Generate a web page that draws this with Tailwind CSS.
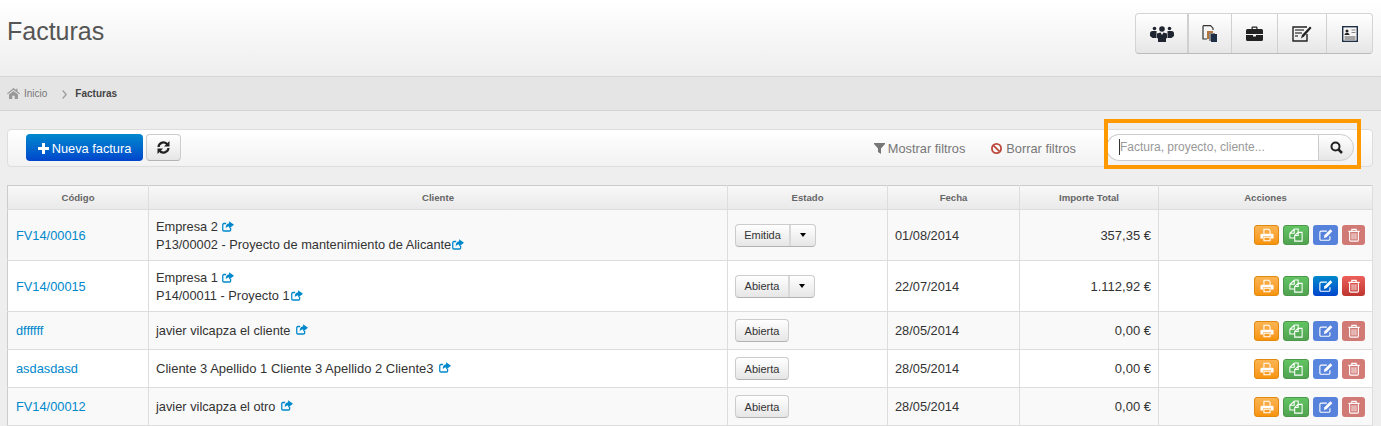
<!DOCTYPE html>
<html lang="es">
<head>
    <meta charset="UTF-8">
    <title>Facturas</title>
    <script src="https://cdn.jsdelivr.net/npm/@tailwindcss/browser@4"></script>
</head>
<body class="bg-[#eeeeee] font-['Liberation_Sans',Arial,sans-serif] text-[12.8px] text-[#333333] h-[426px] overflow-hidden">
    <!-- iconos -->
    <svg class="hidden">
        <symbol id="i-share" viewBox="0 0 16 14">
            <path d="M11.500 8.500V11.500a1.500 1.500 0 0 1-1.500 1.500H2.500A1.500 1.500 0 0 1 1 11.500V4.500A1.500 1.500 0 0 1 2.500 3h3" fill="none" stroke="currentColor" stroke-width="1.700"/>
            <path d="M9.500 0L16 4.800 9.500 9.500V7C7.500 7 6 7.500 5 9.500 4.800 5.500 6.500 3 9.500 2.700z" fill="currentColor"/>
        </symbol>
        <symbol id="i-print" viewBox="0 0 16 16">
            <path d="M4.500 6.500V1.500H10L11.500 3V6.500M4.500 10.500h7v4h-7z" fill="none" stroke="currentColor" stroke-width="1.200"/>
            <path d="M2 6.500h12a1.500 1.500 0 0 1 1.500 1.500V12H12.500V9.500h-9V12H.5V8A1.500 1.500 0 0 1 2 6.500z" fill="currentColor"/>
        </symbol>
        <symbol id="i-copy" viewBox="0 0 16 16">
            <path d="M6 1.200h4.500V5M6 1.200L1 6v5.500h5.500M6 1.200V6H1" fill="none" stroke="currentColor" stroke-width="1.200"/>
            <path d="M10.500 5H15v10H6.500V8.500zM10.500 5v3.500h-4" fill="none" stroke="currentColor" stroke-width="1.200"/>
        </symbol>
        <symbol id="i-edit" viewBox="0 0 16 16">
            <path d="M12.500 9.500V12.500a1.500 1.500 0 0 1-1.500 1.500H2.500A1.500 1.500 0 0 1 1 12.500V5A1.500 1.500 0 0 1 2.500 3.500H9" fill="none" stroke="currentColor" stroke-width="1.300"/>
            <path d="M13 1.500l2.300 2.300L8.500 10.700l-3 .7.700-3z" fill="currentColor"/>
        </symbol>
        <symbol id="i-trash" viewBox="0 0 16 16">
            <path d="M1.500 3.800h13M5.500 3.500V1.500h5v2M3 4v10a1 1 0 0 0 1 1h8a1 1 0 0 0 1-1V4" fill="none" stroke="currentColor" stroke-width="1.300"/>
            <path d="M5.800 6v7M8 6v7M10.200 6v7" stroke="currentColor" stroke-width="1"/>
        </symbol>
    </svg>

    <!-- Cabecera -->
    <header class="h-[77px] border-b border-[#d5d5d5] bg-gradient-to-b from-white to-[#eeeeee] flex justify-between pl-[7px] pr-[8px]">
        <h1 class="text-[25px] leading-[29px] pt-[17px] text-[#555555]">Facturas</h1>
        <div class="mt-[13px] h-[41px] w-[238px] flex border border-[#d4d4d4] border-b-[#bbbbbb] rounded-[4px] bg-gradient-to-b from-white to-[#e6e6e6] text-[#222222]">
            <a class="w-[53px] flex items-center justify-center border-r-2 border-[#d0d0d0]">
                <svg width="24" height="16" viewBox="0 0 24 16" fill="#1f2530"><circle cx="12" cy="3" r="2.800"/><circle cx="4.500" cy="2.500" r="1.800"/><circle cx="19.500" cy="2.500" r="1.800"/><path d="M0 7.500Q0 5 2.500 5H6.500V12H2.500L0 10zM24 7.500Q24 5 21.500 5H17.500V12H21.500L24 10z"/><path d="M7 7.500L10.500 6.500 12 9 13.500 6.500 17 7.500V12L16 12.500V16H8V12.500L7 12z"/></svg>
            </a>
            <a class="w-[43px] flex items-center justify-center border-r border-[#d0d0d0]">
                <svg width="16" height="17" viewBox="0 0 16 17"><path d="M1 .7h7.500l2.500 2.500V5M1 .7V14h4" fill="none" stroke="#333" stroke-width="1.200"/><rect x="5" y="6" width="6" height="8" fill="#b5763e"/><rect x="7" y="8" width="6" height="8" fill="#888"/><rect x="9" y="9" width="6" height="8" fill="#1f2f45"/></svg>
            </a>
            <a class="w-[46px] flex items-center justify-center border-r border-[#d0d0d0]">
                <svg width="17" height="15" viewBox="0 0 17 15" fill="#222"><path d="M5.500 3V1.500A1 1 0 0 1 6.500.5h4a1 1 0 0 1 1 1V3H10.300V1.800H6.700V3z"/><path d="M1.500 3h14A1.500 1.500 0 0 1 17 4.500V8H0V4.500A1.500 1.500 0 0 1 1.500 3zM0 9h7v1.500h3V9h7v4.500a1.500 1.500 0 0 1-1.500 1.500h-14A1.500 1.500 0 0 1 0 13.500z"/></svg>
            </a>
            <a class="w-[49px] flex items-center justify-center border-r border-[#d0d0d0]">
                <svg width="20" height="16" viewBox="0 0 20 16"><path d="M15 8v7H1V1h14" fill="none" stroke="#222" stroke-width="1.400"/><path d="M3 4h9M3 7h7M3 10h3" stroke="#555" stroke-width="1.300"/><path d="M18 .5l1.500 1.500-7.500 8.500-3 2 1-3.500z" fill="#222"/></svg>
            </a>
            <a class="flex-1 flex items-center justify-center">
                <svg width="16" height="16" viewBox="0 0 16 16"><rect x=".7" y=".7" width="14.600" height="14.600" fill="#f5f5f5" stroke="#1f2f45" stroke-width="1.400"/><circle cx="5" cy="5" r="1.500" fill="#222"/><path d="M2.500 9c0-1.500 1-2 2.500-2s2.500 .5 2.500 2z" fill="#222"/><path d="M9.500 4h4M9.500 6.500h4" stroke="#888" stroke-width="1.200"/><path d="M2.500 11h11M2.500 13h11" stroke="#555" stroke-width="1.200"/></svg>
            </a>
        </div>
    </header>

    <!-- Migas -->
    <nav class="h-[34px] bg-[#e5e5e5] border-b border-[#d5d5d5] flex items-center pl-[7px] text-[10px] text-[#777777]">
        <svg width="13" height="11" viewBox="0 0 13 11" fill="#999999"><path d="M6.500 0L0 5.500l.8.800L6.500 1.800l5.700 4.500.8-.800-2.500-2.100V.8H9.200v1.200z"/><path d="M6.500 3L2 6.500V11h3.300V7.800h2.400V11H11V6.500z"/></svg>
        <span class="ml-[4px]">Inicio</span>
        <svg class="ml-[15px] mt-[1px]" width="5" height="9" viewBox="0 0 5 9" fill="none" stroke="#999999" stroke-width="1.200"><path d="M.7 .5l3.500 4-3.500 4"/></svg>
        <strong class="ml-[8px] text-[#444444] font-bold">Facturas</strong>
    </nav>

    <!-- Barra de herramientas -->
    <div class="relative mt-[18px] ml-[7px] mr-[8px] h-[38px] pb-[1px] border border-[#dddddd] rounded-[4px] bg-gradient-to-b from-white to-[#f2f2f2] flex items-center pl-[18px]">
        <button class="h-[27px] w-[117px] pt-[2px] rounded-[4px] bg-gradient-to-b from-[#0088cc] to-[#0044cc] text-white flex items-center justify-center text-[12.8px]">
            <svg class="mr-[3px]" width="11" height="11" viewBox="0 0 11 11" fill="white"><path d="M4 0h3v4h4v3H7v4H4V7H0V4h4z"/></svg>Nueva factura
        </button>
        <button class="ml-[3px] h-[27px] w-[35px] rounded-[4px] border border-[#cccccc] border-b-[#b3b3b3] bg-gradient-to-b from-white to-[#e6e6e6] flex items-center justify-center">
            <svg width="13" height="13" viewBox="0 0 13 13" fill="none" stroke="#222222" stroke-width="2.200"><path d="M1.500 6A5 5 0 0 1 10.500 3.500M11.500 7A5 5 0 0 1 2.500 9.500"/><path d="M12.500 0v5.500H7z M.5 13V7.500H6z" fill="#222222" stroke="none"/></svg>
        </button>
        <a class="ml-auto pt-[2px] flex items-center text-[#777777]">
            <svg class="mr-[3px]" width="11" height="11" viewBox="0 0 11 11" fill="#777777"><path d="M0 0h11v1L7 5.500V11L4 9V5.500L0 1z"/></svg>Mostrar filtros
        </a>
        <a class="ml-[26px] pt-[2px] flex items-center text-[#777777]">
            <svg class="mr-[4px]" width="11" height="11" viewBox="0 0 12 12" fill="none" stroke="#bd4a3e" stroke-width="2"><circle cx="6" cy="6" r="5"/><path d="M2.500 2.500l7 7"/></svg>Borrar filtros
        </a>
        <div class="ml-[30px] mr-[18px] h-[27px] w-[248px] flex">
            <div class="flex-1 bg-white border border-[#cccccc] border-r-0 rounded-l-full flex items-center pl-[12px] pb-[2px] text-[#999999] text-[12px]">
                <span class="border-l border-[#333333] leading-[16px]">Factura, proyecto, cliente...</span>
            </div>
            <button class="w-[36px] border border-[#cccccc] rounded-r-full bg-gradient-to-b from-white to-[#e6e6e6] flex items-center justify-center">
                <svg width="13" height="13" viewBox="0 0 13 13" fill="none" stroke="#222222" stroke-width="2"><circle cx="5.500" cy="5.500" r="4"/><path d="M8.500 8.500l3.500 3.500" stroke-width="2.500"/></svg>
            </button>
        </div>
        <!-- resaltado -->
        <div class="absolute left-[1096px] top-[-11px] w-[257px] h-[50px] border-[4px] border-[#ff9900]"></div>
    </div>

    <!-- Tabla -->
    <table class="mt-[18px] ml-[7px] w-[1366px] table-fixed border-collapse bg-white">
        <colgroup>
            <col class="w-[141px]"><col class="w-[579px]"><col class="w-[160px]"><col class="w-[132px]"><col class="w-[139px]"><col>
        </colgroup>
        <thead>
            <tr class="h-[24px] bg-gradient-to-b from-[#f8f8f8] to-[#e9e9e9] text-[9.6px] font-bold text-[#666666]">
                <th class="border border-[#dddddd] border-t-[#cccccc] border-l-[#cccccc] pt-[2px]">Código</th>
                <th class="border border-[#dddddd] border-t-[#cccccc] pt-[2px]">Cliente</th>
                <th class="border border-[#dddddd] border-t-[#cccccc] pt-[2px]">Estado</th>
                <th class="border border-[#dddddd] border-t-[#cccccc] pt-[2px]">Fecha</th>
                <th class="border border-[#dddddd] border-t-[#cccccc] pt-[2px]">Importe Total</th>
                <th class="border border-[#dddddd] border-t-[#cccccc] pt-[2px]">Acciones</th>
            </tr>
        </thead>
        <tbody>
            <tr class="h-[51px] bg-[#f9f9f9]">
                <td class="border border-[#dddddd] border-l-[#cccccc] pl-[8px] pt-[2px] text-[#0088cc]">FV14/00016</td>
                <td class="border border-[#dddddd] px-[7px] pt-[2px] leading-[18px]">
                    <div class="flex items-center">Empresa 2<svg class="ml-[4px] mb-[2px] text-[#0088cc]" width="12" height="11"><use href="#i-share"/></svg></div>
                    <div class="flex items-center">P13/00002 - Proyecto de mantenimiento de Alicante<svg class="ml-[1px] mb-[2px] text-[#0088cc]" width="12" height="11"><use href="#i-share"/></svg></div>
                </td>
                <td class="border border-[#dddddd] px-[7px]">
                    <div class="flex w-[81px] h-[23px] text-[11px] rounded-[4px] border border-[#cccccc] border-b-[#b3b3b3] bg-gradient-to-b from-white to-[#e6e6e6]">
                        <span class="flex-1 flex items-center justify-center border-r-2 border-[#d8d8d8]">Emitida</span>
                        <span class="w-[24px] flex items-center justify-center"><span class="border-x-[3.5px] border-x-transparent border-t-[4px] border-t-black"></span></span>
                    </div>
                </td>
                <td class="border border-[#dddddd] px-[7px] pt-[2px]">01/08/2014</td>
                <td class="border border-[#dddddd] px-[7px] pt-[2px] text-right text-[13px]">357,35 €</td>
                <td class="border border-[#dddddd] pr-[7px]">
                    <div class="flex justify-end gap-[4px]">
                        <span class="w-[25px] h-[20px] rounded-[3px] bg-gradient-to-b from-[#fbb450] to-[#f89406] border border-[#e08a10] text-white flex items-center justify-center"><svg width="14" height="14"><use href="#i-print"/></svg></span>
                        <span class="w-[26px] h-[20px] rounded-[3px] bg-gradient-to-b from-[#62c462] to-[#51a351] border border-[#4b984b] text-white flex items-center justify-center"><svg width="14" height="14"><use href="#i-copy"/></svg></span>
                        <span class="w-[25px] h-[20px] rounded-[3px] bg-[#0044cc] text-white flex items-center justify-center opacity-65"><svg width="14" height="14"><use href="#i-edit"/></svg></span>
                        <span class="w-[23px] h-[20px] rounded-[3px] bg-[#bd362f] text-white flex items-center justify-center opacity-65"><svg width="14" height="14"><use href="#i-trash"/></svg></span>
                    </div>
                </td>
            </tr>
            <tr class="h-[51px]">
                <td class="border border-[#dddddd] border-l-[#cccccc] pl-[8px] pt-[2px] text-[#0088cc]">FV14/00015</td>
                <td class="border border-[#dddddd] px-[7px] pt-[2px] leading-[18px]">
                    <div class="flex items-center">Empresa 1<svg class="ml-[4px] mb-[2px] text-[#0088cc]" width="12" height="11"><use href="#i-share"/></svg></div>
                    <div class="flex items-center">P14/00011 - Proyecto 1<svg class="ml-[1px] mb-[2px] text-[#0088cc]" width="12" height="11"><use href="#i-share"/></svg></div>
                </td>
                <td class="border border-[#dddddd] px-[7px]">
                    <div class="flex w-[80px] h-[23px] text-[11px] rounded-[4px] border border-[#cccccc] border-b-[#b3b3b3] bg-gradient-to-b from-white to-[#e6e6e6]">
                        <span class="flex-1 flex items-center justify-center border-r-2 border-[#d8d8d8]">Abierta</span>
                        <span class="w-[24px] flex items-center justify-center"><span class="border-x-[3.5px] border-x-transparent border-t-[4px] border-t-black"></span></span>
                    </div>
                </td>
                <td class="border border-[#dddddd] px-[7px] pt-[2px]">22/07/2014</td>
                <td class="border border-[#dddddd] px-[7px] pt-[2px] text-right text-[13px]">1.112,92 €</td>
                <td class="border border-[#dddddd] pr-[7px]">
                    <div class="flex justify-end gap-[4px]">
                        <span class="w-[25px] h-[20px] rounded-[3px] bg-gradient-to-b from-[#fbb450] to-[#f89406] border border-[#e08a10] text-white flex items-center justify-center"><svg width="14" height="14"><use href="#i-print"/></svg></span>
                        <span class="w-[26px] h-[20px] rounded-[3px] bg-gradient-to-b from-[#62c462] to-[#51a351] border border-[#4b984b] text-white flex items-center justify-center"><svg width="14" height="14"><use href="#i-copy"/></svg></span>
                        <span class="w-[25px] h-[20px] rounded-[3px] bg-gradient-to-b from-[#0088cc] to-[#0044cc] text-white flex items-center justify-center"><svg width="14" height="14"><use href="#i-edit"/></svg></span>
                        <span class="w-[23px] h-[20px] rounded-[3px] bg-gradient-to-b from-[#ee5f5b] to-[#bd362f] text-white flex items-center justify-center"><svg width="14" height="14"><use href="#i-trash"/></svg></span>
                    </div>
                </td>
            </tr>
            <tr class="h-[38px] bg-[#f9f9f9]">
                <td class="border border-[#dddddd] border-l-[#cccccc] pl-[8px] text-[#0088cc]">dffffff</td>
                <td class="border border-[#dddddd] px-[7px]">
                    <div class="flex items-center">javier vilcapza el cliente<svg class="ml-[6px] mb-[2px] text-[#0088cc]" width="12" height="11"><use href="#i-share"/></svg></div>
                </td>
                <td class="border border-[#dddddd] px-[7px]">
                    <div class="flex w-[54px] h-[23px] pt-[1px] text-[11px] rounded-[4px] border border-[#cccccc] border-b-[#b3b3b3] bg-gradient-to-b from-white to-[#e6e6e6] items-center justify-center">Abierta</div>
                </td>
                <td class="border border-[#dddddd] px-[7px]">28/05/2014</td>
                <td class="border border-[#dddddd] px-[7px] text-right text-[13px]">0,00 €</td>
                <td class="border border-[#dddddd] pr-[7px]">
                    <div class="flex justify-end gap-[4px]">
                        <span class="w-[25px] h-[20px] rounded-[3px] bg-gradient-to-b from-[#fbb450] to-[#f89406] border border-[#e08a10] text-white flex items-center justify-center"><svg width="14" height="14"><use href="#i-print"/></svg></span>
                        <span class="w-[26px] h-[20px] rounded-[3px] bg-gradient-to-b from-[#62c462] to-[#51a351] border border-[#4b984b] text-white flex items-center justify-center"><svg width="14" height="14"><use href="#i-copy"/></svg></span>
                        <span class="w-[25px] h-[20px] rounded-[3px] bg-[#0044cc] text-white flex items-center justify-center opacity-65"><svg width="14" height="14"><use href="#i-edit"/></svg></span>
                        <span class="w-[23px] h-[20px] rounded-[3px] bg-[#bd362f] text-white flex items-center justify-center opacity-65"><svg width="14" height="14"><use href="#i-trash"/></svg></span>
                    </div>
                </td>
            </tr>
            <tr class="h-[38px]">
                <td class="border border-[#dddddd] border-l-[#cccccc] pl-[8px] text-[#0088cc]">asdasdasd</td>
                <td class="border border-[#dddddd] px-[7px] text-[13px]">
                    <div class="flex items-center">Cliente 3 Apellido 1 Cliente 3 Apellido 2 Cliente3<svg class="ml-[5px] mb-[2px] text-[#0088cc]" width="12" height="11"><use href="#i-share"/></svg></div>
                </td>
                <td class="border border-[#dddddd] px-[7px]">
                    <div class="flex w-[54px] h-[23px] pt-[1px] text-[11px] rounded-[4px] border border-[#cccccc] border-b-[#b3b3b3] bg-gradient-to-b from-white to-[#e6e6e6] items-center justify-center">Abierta</div>
                </td>
                <td class="border border-[#dddddd] px-[7px]">28/05/2014</td>
                <td class="border border-[#dddddd] px-[7px] text-right text-[13px]">0,00 €</td>
                <td class="border border-[#dddddd] pr-[7px]">
                    <div class="flex justify-end gap-[4px]">
                        <span class="w-[25px] h-[20px] rounded-[3px] bg-gradient-to-b from-[#fbb450] to-[#f89406] border border-[#e08a10] text-white flex items-center justify-center"><svg width="14" height="14"><use href="#i-print"/></svg></span>
                        <span class="w-[26px] h-[20px] rounded-[3px] bg-gradient-to-b from-[#62c462] to-[#51a351] border border-[#4b984b] text-white flex items-center justify-center"><svg width="14" height="14"><use href="#i-copy"/></svg></span>
                        <span class="w-[25px] h-[20px] rounded-[3px] bg-[#0044cc] text-white flex items-center justify-center opacity-65"><svg width="14" height="14"><use href="#i-edit"/></svg></span>
                        <span class="w-[23px] h-[20px] rounded-[3px] bg-[#bd362f] text-white flex items-center justify-center opacity-65"><svg width="14" height="14"><use href="#i-trash"/></svg></span>
                    </div>
                </td>
            </tr>
            <tr class="h-[38px] bg-[#f9f9f9]">
                <td class="border border-[#dddddd] border-l-[#cccccc] pl-[8px] text-[#0088cc]">FV14/00012</td>
                <td class="border border-[#dddddd] px-[7px]">
                    <div class="flex items-center">javier vilcapza el otro<svg class="ml-[5px] mb-[2px] text-[#0088cc]" width="12" height="11"><use href="#i-share"/></svg></div>
                </td>
                <td class="border border-[#dddddd] px-[7px]">
                    <div class="flex w-[54px] h-[23px] pt-[1px] text-[11px] rounded-[4px] border border-[#cccccc] border-b-[#b3b3b3] bg-gradient-to-b from-white to-[#e6e6e6] items-center justify-center">Abierta</div>
                </td>
                <td class="border border-[#dddddd] px-[7px]">28/05/2014</td>
                <td class="border border-[#dddddd] px-[7px] text-right text-[13px]">0,00 €</td>
                <td class="border border-[#dddddd] pr-[7px]">
                    <div class="flex justify-end gap-[4px]">
                        <span class="w-[25px] h-[20px] rounded-[3px] bg-gradient-to-b from-[#fbb450] to-[#f89406] border border-[#e08a10] text-white flex items-center justify-center"><svg width="14" height="14"><use href="#i-print"/></svg></span>
                        <span class="w-[26px] h-[20px] rounded-[3px] bg-gradient-to-b from-[#62c462] to-[#51a351] border border-[#4b984b] text-white flex items-center justify-center"><svg width="14" height="14"><use href="#i-copy"/></svg></span>
                        <span class="w-[25px] h-[20px] rounded-[3px] bg-[#0044cc] text-white flex items-center justify-center opacity-65"><svg width="14" height="14"><use href="#i-edit"/></svg></span>
                        <span class="w-[23px] h-[20px] rounded-[3px] bg-[#bd362f] text-white flex items-center justify-center opacity-65"><svg width="14" height="14"><use href="#i-trash"/></svg></span>
                    </div>
                </td>
            </tr>
        </tbody>
    </table>
</body>
</html>
